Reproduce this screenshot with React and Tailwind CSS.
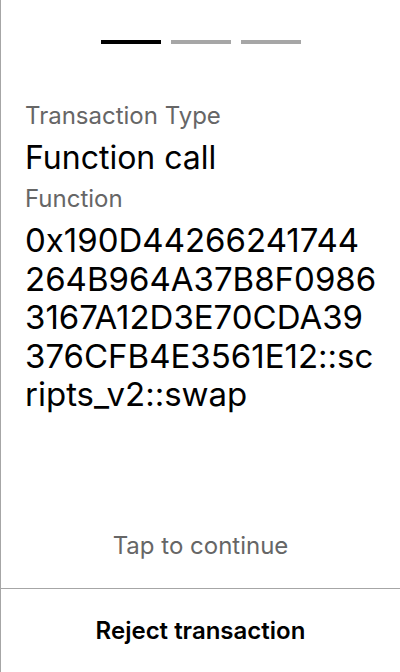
export default function App() {
  // address wraps the same way the wallet screen does
  const addressLines = [
    "0x190D44266241744",
    "264B964A37B8F0986",
    "3167A12D3E70CDA39",
    "376CFB4E3561E12::sc",
    "ripts_v2::swap",
  ]

  return (
    <div
      className="h-[672px] w-[400px] flex flex-col bg-white border-l border-[#a6a6a6] text-black"
      style={{ fontFamily: "Inter, 'Noto Sans', sans-serif" }}
    >
      {/* Step indicator */}
      <div className="flex justify-center gap-[10px] pt-10">
        <div className="h-[4px] w-[60px] bg-black" />
        <div className="h-[4px] w-[60px] bg-[#a6a6a6]" />
        <div className="h-[4px] w-[60px] bg-[#a6a6a6]" />
      </div>

      {/* Content */}
      <div className="flex-1 pl-6 pr-2 pt-[56px]">
        <p className="text-[24px] leading-[32px] text-[#666666]">Transaction Type</p>
        <p className="mt-[6px] text-[32px] leading-[40px]">Function call</p>
        <p className="mt-[5px] text-[24px] leading-[32px] text-[#666666]">Function</p>
        <p className="mt-[6px] text-[33px] leading-[38.5px]">
          {addressLines.map((line) => (
            <span key={line} className="block whitespace-nowrap">
              {line}
            </span>
          ))}
        </p>
      </div>

      <button className="pb-[26px] text-center text-[24px] leading-[32px] text-[#666666]">
        Tap to continue
      </button>

      {/* Footer */}
      <div className="border-t border-[#a6a6a6] h-[84px] flex items-center justify-center">
        <span className="text-[24px] font-semibold">Reject transaction</span>
      </div>
    </div>
  )
}
